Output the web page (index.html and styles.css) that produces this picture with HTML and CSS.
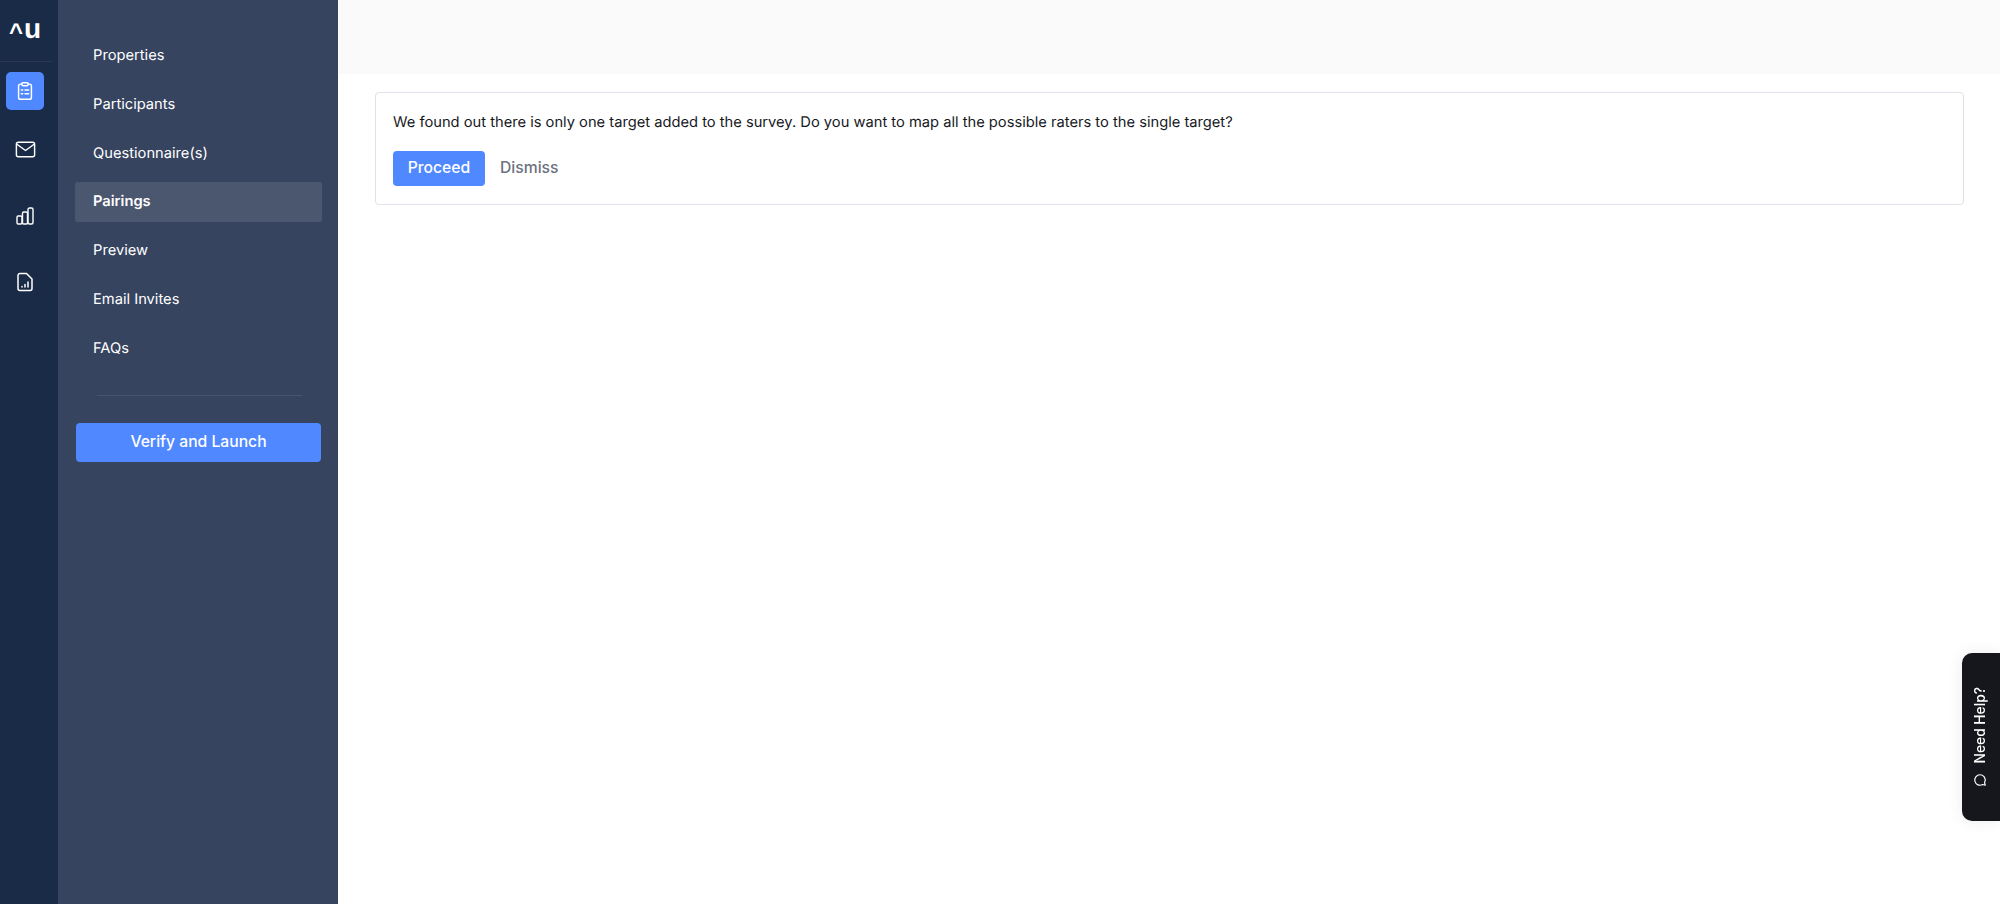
FILE: index.html
```html
<!DOCTYPE html>
<html lang="en">
<head>
<meta charset="utf-8">
<title>Pairings</title>
<link rel="stylesheet" href="styles.css">
</head>
<body>
<div class="app">
  <aside class="rail">
    <div class="logo"><span class="logo-caret">^</span><span class="logo-u">u</span></div>
    <div class="rail-line"></div>
    <a class="rail-btn active">
      <svg viewBox="0 0 24 24" width="22" height="22" fill="none" stroke="#fff" stroke-width="1.6" stroke-linecap="round" stroke-linejoin="round"><path d="M8.5 4.5H7a2 2 0 0 0-2 2V19a2 2 0 0 0 2 2h10a2 2 0 0 0 2-2V6.500a2 2 0 0 0-2-2h-1.500"/><rect x="8.500" y="3" width="7" height="3.200" rx="1.200"/><path d="M8 11h1.500M12 11h4M8 15h1.500M12 15h4"/></svg>
    </a>
    <a class="rail-btn">
      <svg viewBox="0 0 24 24" width="23" height="23" fill="none" stroke="#fff" stroke-width="1.500" stroke-linecap="round" stroke-linejoin="round"><rect x="2.500" y="4.500" width="19" height="15" rx="2"/><path d="M3 6.500l9 6.500 9-6.500"/></svg>
    </a>
    <a class="rail-btn">
      <svg viewBox="0 0 18 18" width="18" height="18" fill="none" stroke="#fff" stroke-width="1.400" stroke-linecap="round" stroke-linejoin="round"><rect x="1" y="9" width="5" height="8" rx="1.200"/><rect x="6.500" y="5" width="5" height="12" rx="1.200"/><rect x="12" y="1" width="5" height="16" rx="1.500"/></svg>
    </a>
    <a class="rail-btn">
      <svg viewBox="0 0 20 20" width="20" height="20" fill="none" stroke="#fff" stroke-width="1.500" stroke-linecap="round" stroke-linejoin="round"><path d="M11.500 1.500H5a2 2 0 0 0-2 2v13a2 2 0 0 0 2 2h10a2 2 0 0 0 2-2V7z"/><path d="M7 15v-.5M10 15v-2.500M13 15v-5"/></svg>
    </a>
  </aside>

  <nav class="side">
    <ul class="menu">
      <li class="menu-item">Properties</li>
      <li class="menu-item">Participants</li>
      <li class="menu-item">Questionnaire(s)</li>
      <li class="menu-item current">Pairings</li>
      <li class="menu-item">Preview</li>
      <li class="menu-item">Email Invites</li>
      <li class="menu-item">FAQs</li>
    </ul>
    <div class="side-line"></div>
    <button class="launch">Verify and Launch</button>
  </nav>

  <main class="main">
    <header class="topbar"></header>
    <section class="notice">
      <p class="notice-text">We found out there is only one target added to the survey. Do you want to map all the possible raters to the single target?</p>
      <div class="actions">
        <button class="proceed">Proceed</button>
        <button class="dismiss">Dismiss</button>
      </div>
    </section>
  </main>
</div>
<button class="help">
  <svg viewBox="0 0 24 24" width="14" height="14" fill="none" stroke="#fff" stroke-width="2" stroke-linecap="round" stroke-linejoin="round"><path d="M12 3a9 9 0 1 0 4.500 16.800L21 21l-1.200-4.500A9 9 0 0 0 12 3z"/></svg>
  <span>Need Help?</span>
</button>
</body>
</html>
```
FILE: styles.css
```css
* { box-sizing: border-box; }
html, body { margin: 0; height: 100%; }
body {
  font-family: Inter, "Liberation Sans", sans-serif;
  background: #fff;
  overflow: hidden;
  text-rendering: geometricPrecision;
}
.app { display: flex; height: 904px; }

.rail {
  width: 58px;
  flex: none;
  background: #1a2b47;
  display: flex;
  flex-direction: column;
  align-items: flex-start;
}
.logo {
  height: 61px;
  width: 50px;
  display: flex;
  justify-content: center;
  align-items: flex-start;
  padding-top: 14px;
  color: #fff;
  font-weight: 700;
  line-height: 1;
}
.logo-caret { font-size: 24px; margin-top: 7px; font-family: "Liberation Sans", sans-serif; }
.logo-u { font-size: 28px; margin-left: 1px; font-family: "Liberation Sans", sans-serif; line-height: 30px; }
.rail-line { width: 52px; height: 1px; background: #2a3a55; }
.rail-btn {
  width: 38px;
  height: 38px;
  margin: 29px 0 0 6px;
  border-radius: 5px;
  display: flex;
  align-items: center;
  justify-content: center;
}
.rail-btn.active { background: #5088ff; margin-top: 10px; }
.rail-btn.active + .rail-btn { margin-top: 20px; }
.rail-btn:last-child { margin-top: 28px; }

.side {
  width: 280px;
  flex: none;
  background: #36445f;
  padding: 36px 16px 0 17px;
  color: #fff;
}
.menu { list-style: none; margin: 0; padding: 0; display: flex; flex-direction: column; gap: 8.800px; }
.menu-item {
  height: 40px;
  line-height: 39px;
  padding-left: 18px;
  font-size: 14.700px;
  border-radius: 2px;
  color: #fff;
}
.menu-item.current { background: #4b566f; font-weight: 600; }
.side-line { height: 1px; background: #465470; margin: 26px 20px 0 22px; }
.launch {
  display: block;
  width: 245px;
  height: 39px;
  margin: 27px 0 0 1px;
  padding: 0 0 1px;
  border: 0;
  border-radius: 4px;
  background: #5088ff;
  color: #fff;
  font: 500 15.700px Inter, sans-serif;
}

.main { flex: 1; min-width: 0; }
.topbar { height: 74px; background: #fafafa; }
.notice {
  margin: 18px 36px 0 37px;
  height: 113px;
  border: 1px solid #dfe2e8;
  border-radius: 4px;
  padding: 19px 17px;
  background: #fff;
}
.notice-text { margin: 0; font-size: 14.700px; line-height: 21px; color: #16181d; }
.actions { display: flex; align-items: center; gap: 15px; margin-top: 18px; }
.proceed {
  width: 92px;
  height: 35px;
  padding: 0 0 2px;
  border: 0;
  border-radius: 4px;
  background: #5088ff;
  color: #fff;
  font: 500 15.700px Inter, sans-serif;
}
.dismiss {
  border: 0;
  padding: 0 0 2px;
  background: none;
  color: #6b7280;
  font: 500 15.700px Inter, sans-serif;
}

.help {
  position: fixed;
  right: 0;
  top: 653px;
  width: 38px;
  height: 168px;
  border: 0;
  border-radius: 10px 0 0 10px;
  background: #15171c;
  color: #fff;
  box-shadow: 0 0 16px rgba(0,0,0,.08);
  display: flex;
  flex-direction: column-reverse;
  align-items: center;
  justify-content: flex-start;
  gap: 9px;
  padding: 0 2px 34px 0;
  font: 500 13.800px Inter, sans-serif;
}
.help span { writing-mode: vertical-rl; transform: rotate(180deg); }
```
